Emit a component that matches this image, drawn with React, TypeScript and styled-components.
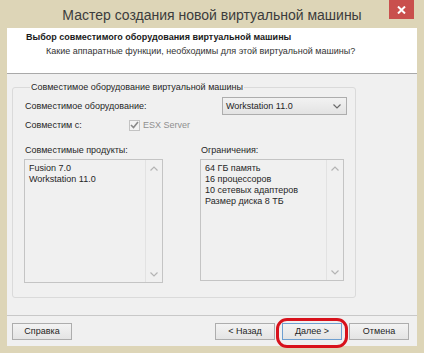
import React from 'react'
import styled, { createGlobalStyle } from 'styled-components'

const GlobalStyle = createGlobalStyle`
  html, body {
    margin: 0;
    padding: 0;
    background: #ddd5b7;
  }
  * {
    box-sizing: border-box;
  }
`

const Window = styled.div`
  width: 424px;
  height: 353px;
  background: #ddd5b7;
  display: flex;
  flex-direction: column;
  padding: 0 7px 7px 7px;
  font-family: "Liberation Sans", Arial, sans-serif;
  font-size: 9px;
  line-height: 11px;
  color: #262626;
`

const TitleBar = styled.div`
  position: relative;
  height: 28px;
  flex: none;
  display: flex;
  align-items: center;
  justify-content: center;
`

const Title = styled.div`
  font-family: "Liberation Sans", Arial, sans-serif;
  font-size: 14px;
  line-height: 18px;
  color: #3c3c3c;
  margin-top: 2px;
`

const CloseButton = styled.div`
  position: absolute;
  top: 0;
  right: 3px;
  width: 25px;
  height: 19px;
  background: #c9504d;
  display: flex;
  align-items: center;
  justify-content: center;
`

const Body = styled.div`
  flex: 1;
  display: flex;
  flex-direction: column;
  background: #f0f0f0;
`

const Header = styled.div`
  height: 46px;
  flex: none;
  background: #fff;
  border-bottom: 1px solid #a9a9a9;
  padding: 4px 0 0 19px;
`

const HeaderTitle = styled.div`
  font-weight: bold;
  color: #1a1a1a;
`

const HeaderSub = styled.div`
  margin: 3px 0 0 20px;
  color: #333;
`

const Content = styled.div`
  flex: 1;
  padding: 8px 0 0 5px;
`

const Group = styled.fieldset`
  width: 344px;
  height: 216px;
  margin: 0;
  padding: 4px 0 0 12px;
  border: 1px solid #dadada;
  border-radius: 3px;
`

const Legend = styled.legend`
  margin-left: 5px;
  padding: 0 1px;
  color: #262626;
`

const Row = styled.div<{ $top: number; $h: number }>`
  display: flex;
  align-items: center;
  height: ${p => p.$h}px;
  margin-top: ${p => p.$top}px;
`

const Label = styled.div<{ $w: number }>`
  width: ${p => p.$w}px;
  flex: none;
`

const Select = styled.div`
  width: 125px;
  height: 18px;
  border: 1px solid #adadad;
  background: linear-gradient(#f2f2f2, #e3e3e3);
  display: flex;
  align-items: center;
  justify-content: space-between;
  padding: 0 5px 0 3px;
  color: #1e1e1e;
`

const Check = styled.div`
  display: flex;
  align-items: center;
  gap: 3px;
  color: #8f8f8f;
`

const CheckBox = styled.div`
  width: 11px;
  height: 11px;
  border: 1px solid #c3c3c3;
  background: #f4f4f4;
  display: flex;
  align-items: center;
  justify-content: center;
`

const Columns = styled.div`
  display: flex;
  gap: 37px;
  margin-top: 14px;
  margin-left: -1px;
`

const Column = styled.div<{ $w: number }>`
  width: ${p => p.$w}px;
  display: flex;
  flex-direction: column;
`

const ColLabel = styled.div`
  padding-left: 1px;
  margin-bottom: 3px;
`

const List = styled.div<{ $h: number }>`
  height: ${p => p.$h}px;
  border: 1px solid #c4c4c4;
  background: #f0f0f0;
  display: flex;
`

const ListItems = styled.div`
  flex: 1;
  padding: 3px 0 0 4px;
`

const ScrollBar = styled.div`
  width: 17px;
  border-left: 1px solid #e2e2e2;
  display: flex;
  flex-direction: column;
  justify-content: space-between;
  align-items: center;
  padding: 6px 0 5px;
`

const Footer = styled.div`
  height: 31px;
  flex: none;
  border-top: 1px solid #c8c8c8;
  display: flex;
  justify-content: space-between;
  align-items: flex-start;
  padding: 7px 8px 0 5px;
`

const ButtonGroup = styled.div`
  display: flex;
  gap: 7px;
`

const Button = styled.div<{ $default?: boolean }>`
  position: relative;
  width: 60px;
  height: 17px;
  border: 1px solid ${p => (p.$default ? '#6e9fd0' : '#adadad')};
  background: linear-gradient(#f3f3f3, #e4e4e4);
  display: flex;
  align-items: center;
  justify-content: center;
  color: #1e1e1e;
`

const Highlight = styled.div`
  position: absolute;
  left: -7px;
  right: -7px;
  top: -6px;
  bottom: -9px;
  border: 3px solid #d8121c;
  border-radius: 11px;
`

const Chevron = ({ up, color = '#b4b4b4' }: { up?: boolean; color?: string }) => (
  <svg width="8" height="5" viewBox="0 0 8 5">
    <path
      d={up ? 'M0.5 4.5 L4 1 L7.5 4.5' : 'M0.5 0.5 L4 4 L7.5 0.5'}
      fill="none"
      stroke={color}
      strokeWidth="1.2"
    />
  </svg>
)

const products = ['Fusion 7.0', 'Workstation 11.0']
const limits = ['64 ГБ память', '16 процессоров', '10 сетевых адаптеров', 'Размер диска 8 ТБ']

const App = () => {
  return (
    <>
      <GlobalStyle />
      <Window>
        <TitleBar>
          <Title>Мастер создания новой виртуальной машины</Title>
          <CloseButton>
            <svg width="9" height="8" viewBox="0 0 9 8">
              <path d="M1 0.5 L8 7.5 M8 0.5 L1 7.5" stroke="#fff" strokeWidth="2" />
            </svg>
          </CloseButton>
        </TitleBar>
        <Body>
          <Header>
            <HeaderTitle>Выбор совместимого оборудования виртуальной машины</HeaderTitle>
            <HeaderSub>Какие аппаратные функции, необходимы для этой виртуальной машины?</HeaderSub>
          </Header>
          <Content>
            <Group>
              <Legend>Совместимое оборудование виртуальной машины</Legend>
              <Row $top={0} $h={18}>
                <Label $w={197}>Совместимое оборудование:</Label>
                <Select>
                  <span>Workstation 11.0</span>
                  <Chevron color="#6a6a6a" />
                </Select>
              </Row>
              <Row $top={4} $h={12}>
                <Label $w={104}>Совместим с:</Label>
                <Check>
                  <CheckBox>
                    <svg width="9" height="8" viewBox="0 0 9 8">
                      <path d="M1 4 L3.5 6.5 L8 1" fill="none" stroke="#8a8a8a" strokeWidth="1.6" />
                    </svg>
                  </CheckBox>
                  <span>ESX Server</span>
                </Check>
              </Row>
              <Columns>
                <Column $w={139}>
                  <ColLabel>Совместимые продукты:</ColLabel>
                  <List $h={124}>
                    <ListItems>
                      {products.map(p => (
                        <div key={p}>{p}</div>
                      ))}
                    </ListItems>
                    <ScrollBar>
                      <Chevron up />
                      <Chevron />
                    </ScrollBar>
                  </List>
                </Column>
                <Column $w={144}>
                  <ColLabel>Ограничения:</ColLabel>
                  <List $h={122}>
                    <ListItems>
                      {limits.map(l => (
                        <div key={l}>{l}</div>
                      ))}
                    </ListItems>
                    <ScrollBar>
                      <Chevron up />
                      <Chevron />
                    </ScrollBar>
                  </List>
                </Column>
              </Columns>
            </Group>
          </Content>
          <Footer>
            <Button>Справка</Button>
            <ButtonGroup>
              <Button>&lt; Назад</Button>
              <Button $default>
                Далее &gt;
                <Highlight />
              </Button>
              <Button>Отмена</Button>
            </ButtonGroup>
          </Footer>
        </Body>
      </Window>
    </>
  )
}

export default App
